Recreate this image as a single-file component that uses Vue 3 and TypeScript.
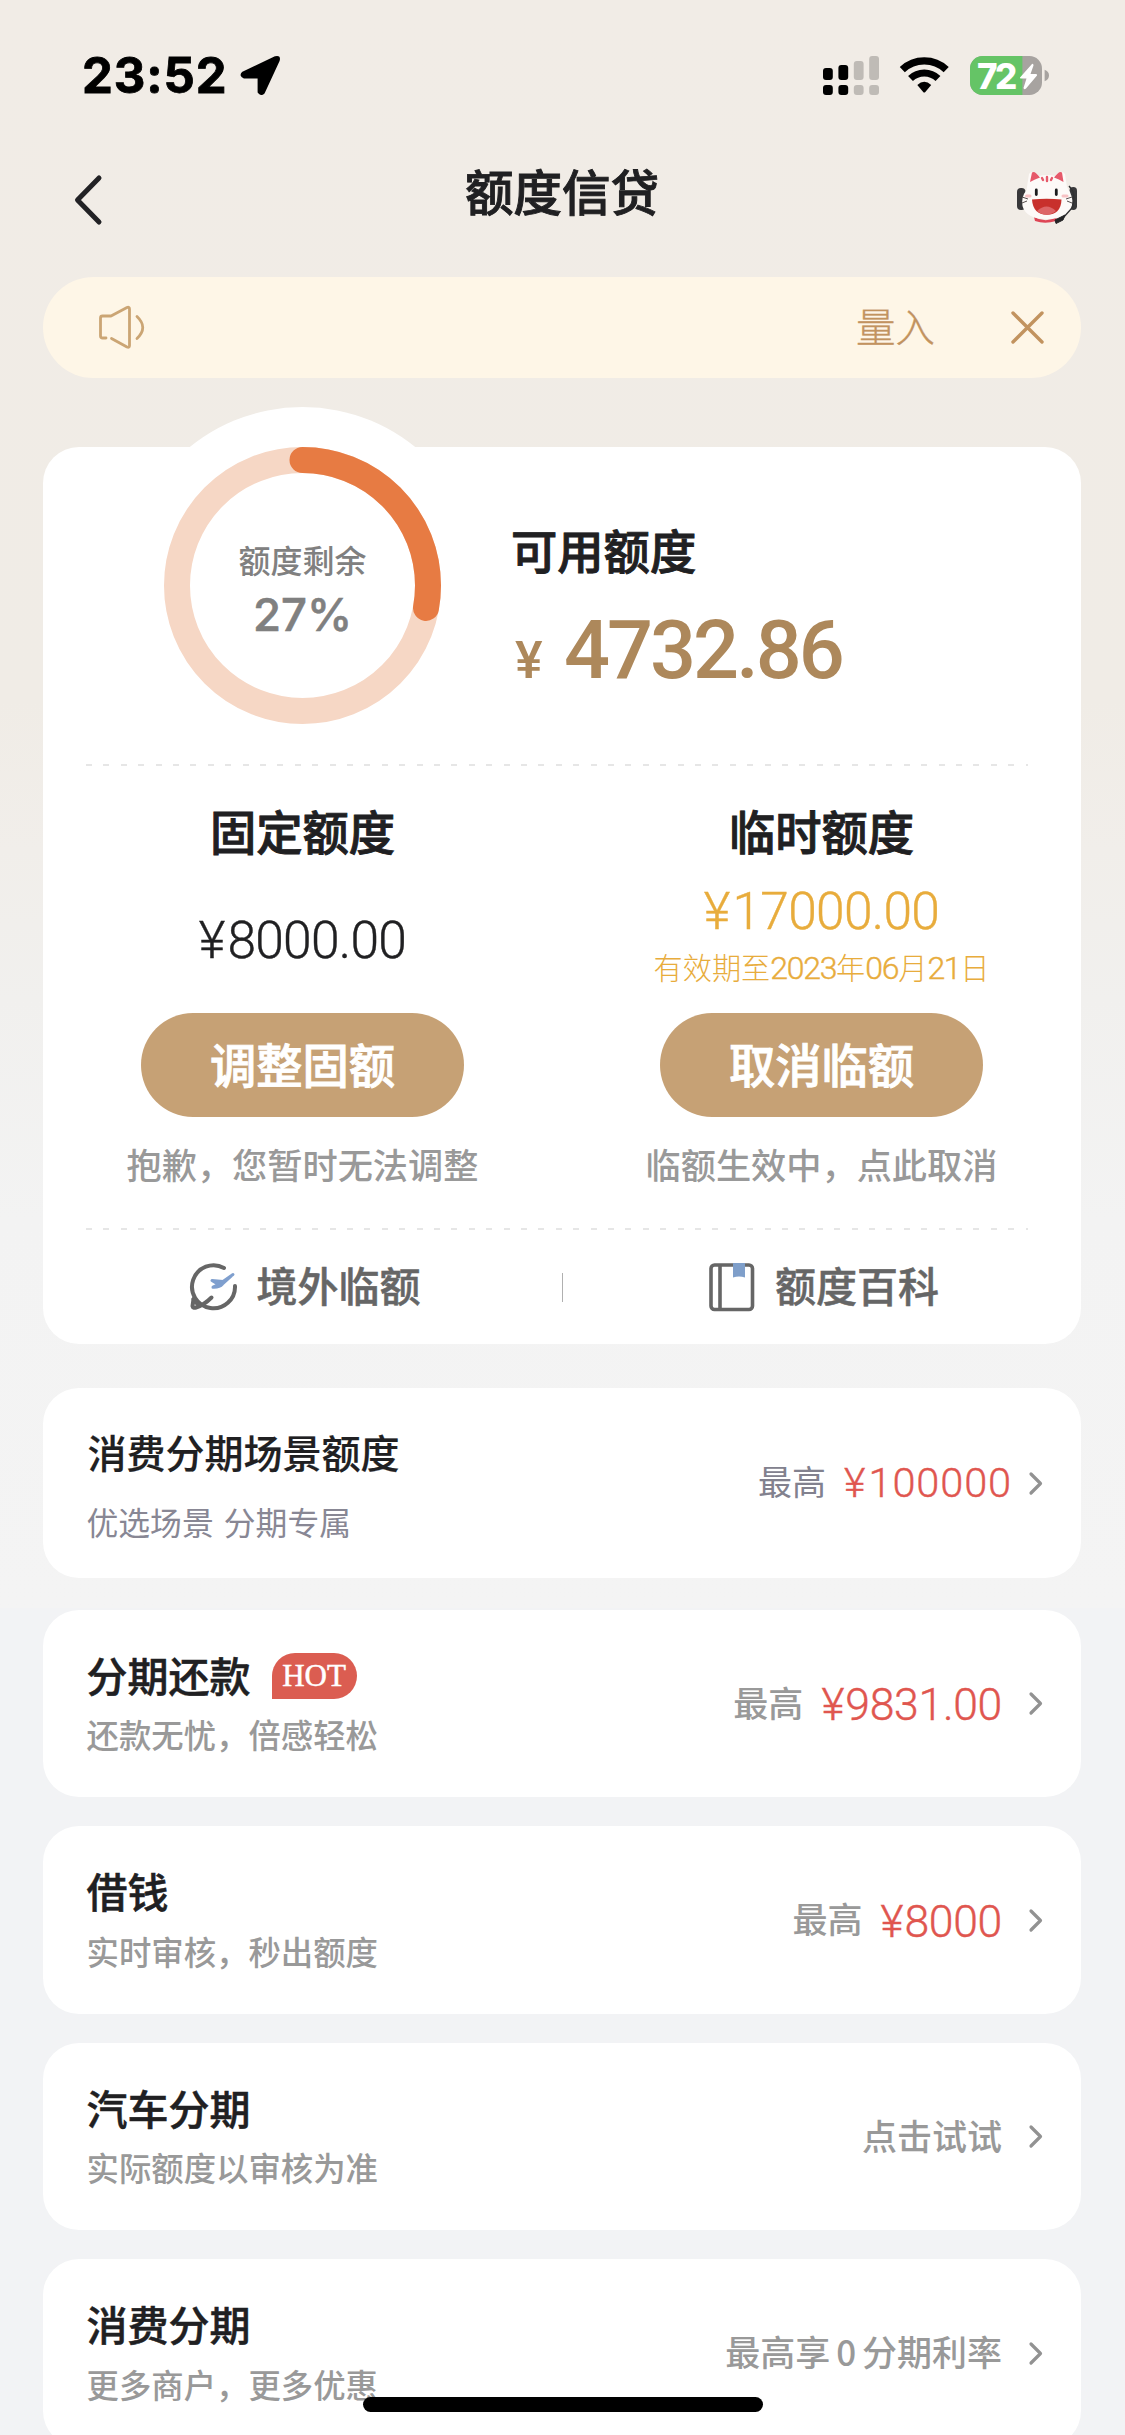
<script setup lang="ts">
interface Offer {
  title: string
  desc: string
  hot?: boolean
  label?: string
  amount?: string
  action?: string
  scene?: boolean
}

const offers: Offer[] = [
  { title: '消费分期场景额度', desc: '优选场景 分期专属', label: '最高', amount: '100000', scene: true },
  { title: '分期还款', desc: '还款无忧，倍感轻松', hot: true, label: '最高', amount: '9831.00' },
  { title: '借钱', desc: '实时审核，秒出额度', label: '最高', amount: '8000' },
  { title: '汽车分期', desc: '实际额度以审核为准', action: '点击试试' },
  { title: '消费分期', desc: '更多商户，更多优惠', action: '最高享 0 分期利率' },
]

const signalBars = [
  { x: 0, y: 12, on: true },
  { x: 15.4, y: 9, on: true },
  { x: 30.8, y: 5, on: false },
  { x: 46.2, y: 0, on: false },
]

const ringRadius = 125.5
const ringLength = 2 * Math.PI * ringRadius
const remaining = 4732.86 / 17000
</script>

<template>
  <div class="page">
    <header class="status">
      <div class="status-left">
        <span class="time">23:52</span>
        <svg class="arrow" width="41" height="41" viewBox="0 0 41 41">
          <path d="M3 18 35.5 2.600Q39.500 1.300 38.300 5.300L23.500 37.500Q21 40 19 37V22H4Q.5 20.500 3 18Z" fill="#000" stroke="#000" stroke-width="2.800" stroke-linejoin="round" />
        </svg>
      </div>
      <div class="status-right">
        <svg width="56" height="39" viewBox="0 0 56 39">
          <g v-for="bar in signalBars" :key="bar.x" :fill="bar.on ? '#000' : '#bfbbb6'">
            <rect :x="bar.x" :y="bar.y" width="9.800" :height="24 - bar.y" rx="3" />
            <rect :x="bar.x" y="29" width="9.800" height="10" rx="3" />
          </g>
        </svg>
        <svg class="wifi" width="49" height="37" viewBox="0 0 49 37">
          <g fill="none" stroke="#000">
            <path d="M2.300 12.600A32 32 0 0 1 46.200 12.600" stroke-width="7.400" />
            <path d="M10.500 21.600A19.800 19.800 0 0 1 38 21.600" stroke-width="7" />
          </g>
          <path d="M17.300 28Q24.250 21.600 31.200 28L25.300 35Q24.250 36.200 23.200 35Z" />
        </svg>
        <svg class="battery" width="80" height="39" viewBox="0 0 80 39">
          <clipPath id="cell"><rect width="72" height="39" rx="12.500" /></clipPath>
          <g clip-path="url(#cell)">
            <rect width="72" height="39" fill="#a7a3a0" />
            <rect width="52.400" height="39" fill="#65c466" />
          </g>
          <path d="M74.600 13.800Q79 15.500 79 19.500T74.600 25.200Z" fill="#a7a3a0" />
          <text x="7" y="32.600" class="battery-text">72</text>
          <path d="M62 8 50 21.500Q49.500 22.500 51 22.500H56.500L53.500 32Q54 34 56 32.500L67 19.500Q67.500 18 66 18H60.500L63.500 9.500Q63.500 7.300 62 8Z" fill="#fff" />
        </svg>
      </div>
    </header>

    <nav class="nav">
      <svg class="back" width="28" height="50" viewBox="0 0 28 50">
        <path d="M25 3 3.500 25 25 47" fill="none" stroke="#222225" stroke-width="5" stroke-linecap="round" stroke-linejoin="round" />
      </svg>
      <h1>额度信贷</h1>
      <svg class="mascot" width="60" height="54" viewBox="0 0 60 54">
        <path d="M17 47Q29 53.500 40 47L39 51Q28 54.500 18 51Z" fill="#de4555" />
        <rect x="0" y="18" width="8.500" height="22" rx="4" fill="#38383a" />
        <rect x="52.500" y="17" width="7.500" height="23" rx="3.700" fill="#38383a" />
        <path d="M9.500 20 12 4Q15-1 22 6Q30 4 38 6Q44-1 48 4L50 17Q57 27 55 36 50 49 30 49 9 49 5.500 36 4 27 9.500 20Z" fill="#fdfaf8" />
        <path d="M13 12 15 2.500Q17.500 0 23 7.500Q18 9 13 12Z" fill="#e6596a" />
        <path d="M46.500 12 45 2.500Q42.500 0 37 7.500Q42 9 46.500 12Z" fill="#e6596a" />
        <path d="M30 7V11M25 8 26 10M35 8 34 10" stroke="#e6596a" stroke-width="2.400" stroke-linecap="round" />
        <path d="M19.300 20V24.500M39.300 20V24.500" stroke="#1c1c1e" stroke-width="2.800" stroke-linecap="round" />
        <path d="M9.500 26H13M46 26H50" stroke="#f7c2c4" stroke-width="3" stroke-linecap="round" />
        <path d="M5 27 11 29M5 33 10 31M55 27 49 29M55 33 50 31" stroke="#57504f" stroke-width="1" />
        <path d="M15 29.500Q29.500 28 44.500 29.500 44 44.500 30 44.800 16 44.500 15 29.500Z" fill="#c8302c" />
        <path d="M20 41Q29.500 32 39 41 34 44.800 30 44.800 24 44.500 20 41Z" fill="#dd6567" />
        <path d="M52 16Q60 24 55 38L46 48" fill="none" stroke="#303032" stroke-width="1.400" />
        <path d="M38 50 48 45 46 50 39 53.500Z" fill="#252527" stroke="#252527" stroke-linejoin="round" />
      </svg>
    </nav>

    <main>
      <section class="notice">
        <svg width="46" height="43" viewBox="0 0 46 43" fill="none" stroke="#cba574" stroke-width="2.800" stroke-linecap="round" stroke-linejoin="round">
          <path d="M7 32H3.500Q1.500 32 1.500 30V12Q1.500 10 3.500 10H12L28 1.500Q30.500.500 30.500 3V39.500Q30.500 42 28 41L12.500 32.500M38 10.500Q49.500 21.500 38 32.500" />
        </svg>
        <span class="notice-text">量入</span>
        <svg class="close" width="33" height="33" viewBox="0 0 33 33">
          <path d="M2 2 31 31M31 2 2 31" stroke="#c2935f" stroke-width="3.400" stroke-linecap="round" />
        </svg>
      </section>

      <section class="card quota">
        <div class="summary">
          <div class="ring">
            <svg width="277" height="277" viewBox="0 0 277 277">
              <circle cx="138.500" cy="138.500" r="178.500" fill="#fff" />
              <circle cx="138.500" cy="138.500" :r="ringRadius" fill="none" stroke="#f6d7c5" stroke-width="26" />
              <circle
                cx="138.500"
                cy="138.500"
                :r="ringRadius"
                fill="none"
                stroke="#e77b43"
                stroke-width="26"
                stroke-linecap="round"
                :stroke-dasharray="`${ringLength * remaining} ${ringLength}`"
                transform="rotate(-90 138.500 138.500)"
              />
            </svg>
            <div class="ring-label">
              <span>额度剩余</span>
              <b>27%</b>
            </div>
          </div>
          <div class="available">
            <h2>可用额度</h2>
            <p><small>¥</small><strong>4732.86</strong></p>
          </div>
        </div>
        <div class="dashes"></div>
        <div class="columns">
          <div class="column">
            <h2>固定额度</h2>
            <div class="value fixed"><p class="money">¥<i>8000.00</i></p></div>
            <button>调整固额</button>
            <p class="hint">抱歉，您暂时无法调整</p>
          </div>
          <div class="column">
            <h2>临时额度</h2>
            <div class="value temp">
              <p class="money">¥<i>17000.00</i></p>
              <p class="until">有效期至<i>2023</i>年<i>06</i>月<i>21</i>日</p>
            </div>
            <button>取消临额</button>
            <p class="hint">临额生效中，点此取消</p>
          </div>
        </div>
        <div class="dashes"></div>
        <div class="links">
          <a class="link">
            <svg width="47" height="48" viewBox="0 0 47 48" fill="none" stroke-linecap="round" stroke-linejoin="round">
              <g stroke="#666" stroke-width="4">
                <path d="M34 5A21.500 21.500 0 1 0 45 23" />
                <path d="M3.500 36 2.500 43Q3 45.500 6 44.500 14 42 21.500 34.500" />
                <path d="M3.500 36Q5 40 10 42" />
              </g>
              <path d="M43 11.500 32.500 21Q29.500 24.500 23 24.200L28.500 21.500 22 17.500 33 18.500Z" fill="#7f9fce" stroke="#7f9fce" stroke-width="3" />
            </svg>
            <span>境外临额</span>
          </a>
          <span class="bar"></span>
          <a class="link">
            <svg width="46" height="49" viewBox="0 0 46 49">
              <rect x="2" y="2" width="41.500" height="44.500" rx="3.500" fill="none" stroke="#666" stroke-width="3.600" />
              <path d="M11 2V46" stroke="#666" stroke-width="3.600" />
              <path d="M24 0H36V14.500Q30 12.500 24 14.500Z" fill="#7f9fca" />
            </svg>
            <span>额度百科</span>
          </a>
        </div>
      </section>

      <section v-for="offer in offers" :key="offer.title" class="card offer" :class="{ scene: offer.scene }">
        <div class="offer-main">
          <div class="offer-title">
            <h3>{{ offer.title }}</h3>
            <span v-if="offer.hot" class="hot">HOT</span>
          </div>
          <p>{{ offer.desc }}</p>
        </div>
        <div class="offer-side">
          <span v-if="offer.label" class="label">{{ offer.label }}</span>
          <span v-if="offer.amount" class="amount">¥<i>{{ offer.amount }}</i></span>
          <span v-if="offer.action" class="label">{{ offer.action }}</span>
          <svg class="chevron" width="14" height="23" viewBox="0 0 14 23">
            <path d="M2 2 11.500 11.500 2 21" fill="none" stroke="#929292" stroke-width="3.200" stroke-linecap="round" stroke-linejoin="round" />
          </svg>
        </div>
      </section>
    </main>
    <div class="home"></div>
  </div>
</template>

<style>
body {
  margin: 0;
  background: #f2f3f5;
}
</style>

<style scoped>
.page {
  position: relative;
  box-sizing: border-box;
  width: 1125px;
  height: 2435px;
  overflow: hidden;
  font-family: "Noto Sans CJK SC", sans-serif;
  color: #202022;
  background: linear-gradient(#f1ece6 0, #f0ece6 700px, #f1eeea 850px, #f1f0ee 1000px, #f3f3f3 1220px, #f4f4f4 1608px, #f2f3f5 1608px);
}
h1, h2, h3, p {
  margin: 0;
}
h1, h2, button {
  -webkit-text-stroke: 0.9px currentColor;
}
i {
  font-style: normal;
}
svg {
  display: block;
  flex: none;
  overflow: visible;
}
.status {
  display: flex;
  justify-content: space-between;
  align-items: center;
  height: 150px;
  padding: 0 75px 0 82px;
}
.status-left, .status-right {
  display: flex;
  align-items: center;
}
.time {
  padding-top: 1px;
  font: 700 49px/60px Inter, sans-serif;
  letter-spacing: 0.9px;
  color: #000;
  -webkit-text-stroke: 0.8px #000;
}
.arrow {
  margin-left: 12px;
}
.wifi {
  margin-left: 21px;
}
.battery {
  margin-left: 21px;
}
.battery-text {
  font: 800 35px Inter, sans-serif;
  letter-spacing: -2.500px;
  fill: #fff;
}
.nav {
  display: flex;
  align-items: center;
  justify-content: space-between;
  height: 99px;
  padding: 0 48px 0 74px;
}
.nav h1 {
  padding: 0 0 19px 5px;
  font-size: 48.500px;
  line-height: 60px;
  font-weight: 500;
}
.mascot {
  margin-top: -5px;
}
main {
  padding: 28px 44px 0 43px;
}
.notice {
  display: flex;
  align-items: center;
  height: 101px;
  padding: 0 37px 0 56px;
  border-radius: 51px;
  background: #fef6e7;
}
.notice-text {
  margin-left: auto;
  padding-bottom: 6px;
  font-size: 39.500px;
  font-weight: 300;
  color: #c2935f;
  -webkit-text-stroke: 0.3px currentColor;
}
.close {
  margin-left: 76px;
}
.card {
  border-radius: 36px;
  background: #fff;
}
.quota {
  margin-top: 69px;
}
.summary {
  display: flex;
  height: 317px;
}
.ring {
  display: grid;
  margin-left: 121px;
  height: 277px;
}
.ring > * {
  grid-area: 1 / 1;
}
.ring-label {
  display: flex;
  flex-direction: column;
  align-items: center;
  padding-top: 89px;
  color: #808080;
  z-index: 1;
}
.ring-label span {
  font-size: 32px;
  line-height: 46px;
  font-weight: 500;
}
.ring-label b {
  margin-top: 8px;
  font: 500 45.500px/50px Inter, sans-serif;
  -webkit-text-stroke: 0.6px currentColor;
}
.available {
  margin-left: 69px;
  padding-top: 71.500px;
}
h2 {
  font-size: 46.300px;
  line-height: 60px;
  font-weight: 500;
}
.available h2 {
  padding-left: 1px;
}
.available p {
  display: flex;
  align-items: baseline;
  margin-top: 32.500px;
  height: 80px;
  font-family: Roboto, sans-serif;
  line-height: 80px;
  color: #ad885b;
}
.available small {
  width: 49px;
  margin-left: 5px;
  font-size: 52px;
  font-weight: 500;
}
.available strong {
  font-size: 81px;
  font-weight: 500;
  letter-spacing: -3px;
}
.dashes {
  height: 2px;
  margin: 0 53px 0 42.500px;
  background: repeating-linear-gradient(90deg, #e6e6e6 0 6px, transparent 6px 17.400px);
}
.columns {
  display: flex;
  height: 462px;
}
.column {
  flex: 1;
  display: flex;
  flex-direction: column;
  align-items: center;
}
.column h2 {
  margin-top: 34px;
}
.value {
  box-sizing: border-box;
  display: flex;
  flex-direction: column;
  align-items: center;
  height: 153px;
}
.fixed {
  padding-top: 55px;
}
.temp {
  padding-top: 26px;
  color: #e8ac3c;
}
.money {
  font: 300 51.500px/51px Roboto, sans-serif;
  white-space: nowrap;
  -webkit-text-stroke: 0.4px currentColor;
}
.money i {
  margin-left: 2px;
  letter-spacing: -0.700px;
}
.until {
  margin-top: 9px;
  font-size: 29.200px;
  line-height: 40px;
  font-weight: 300;
  white-space: nowrap;
}
.until i {
  font-family: Roboto, sans-serif;
  font-size: 32px;
  letter-spacing: -1.300px;
  -webkit-text-stroke: 0.4px currentColor;
}
button {
  width: 323px;
  height: 104px;
  border: 0;
  border-radius: 52px;
  padding: 0 0 4px;
  font: 500 46.300px/60px "Noto Sans CJK SC", sans-serif;
  color: #fff;
  background: #c6a175;
}
.hint {
  margin-top: 23px;
  font-size: 35.200px;
  line-height: 48px;
  font-weight: 500;
  color: #999;
}
.links {
  display: flex;
  align-items: center;
  height: 114px;
}
.link {
  flex: 1;
  display: flex;
  align-items: center;
  justify-content: center;
  gap: 20px;
  font-size: 41px;
  font-weight: 500;
  line-height: 50px;
  color: #666;
  padding-left: 5px;
  -webkit-text-stroke: 0.5px currentColor;
}
.link span {
  padding-bottom: 6px;
}
.bar {
  width: 1px;
  height: 29px;
  margin: 0 -1px 0 0;
  background: #b0b0b0;
}
.offer {
  box-sizing: border-box;
  display: flex;
  justify-content: space-between;
  height: 187.500px;
  margin-top: 29px;
  padding: 39.500px 38px 0 43.500px;
}
.scene {
  height: 190px;
  margin-top: 44px;
  padding-top: 38px;
}
.scene + .offer {
  margin-top: 31.500px;
}
.offer-title {
  display: flex;
  align-items: center;
  height: 50px;
}
h3 {
  padding-bottom: 1px;
  font-size: 41px;
  line-height: 50px;
  font-weight: 500;
  -webkit-text-stroke: 0.5px currentColor;
}
.scene h3 {
  padding: 0 0 1px 1px;
  font-size: 39px;
  -webkit-text-stroke: 0.2px currentColor;
}
.hot {
  width: 85px;
  height: 46px;
  margin: 4px 0 0 21px;
  border-radius: 23px 23px 23px 0;
  font: 31px/46px "Liberation Serif", serif;
  text-align: center;
  color: #fff;
  background: #db5d51;
  -webkit-text-stroke: 0.5px #fff;
}
.offer-main p {
  margin-top: 15px;
  font-size: 32.400px;
  line-height: 40px;
  font-weight: 500;
  color: #999;
}
.scene .offer-main p {
  margin-top: 25px;
  font-size: 31.800px;
  font-weight: 400;
  word-spacing: 3px;
  color: #888794;
}
.offer-side {
  display: flex;
  align-items: center;
  height: 109px;
}
.scene .offer-side {
  height: 114px;
}
.label {
  padding-bottom: 4px;
  font-size: 35px;
  line-height: 50px;
  font-weight: 500;
  word-spacing: -2px;
  color: #999;
}
.scene .label {
  font-size: 34px;
  font-weight: 400;
  color: #82818e;
}
.amount {
  margin-left: 18px;
  font: 300 44.500px/50px Roboto, sans-serif;
  color: #e0564f;
  padding-top: 3px;
  -webkit-text-stroke: 0.4px currentColor;
}
.amount i {
  margin-left: 1px;
  letter-spacing: -0.300px;
}
.scene .amount {
  font-size: 41.500px;
  padding-top: 0;
}
.scene .amount i {
  margin-left: 3px;
  letter-spacing: 0.900px;
}
.chevron {
  margin-left: 27px;
}
.scene .chevron {
  margin-left: 17px;
}
.home {
  position: absolute;
  left: 363px;
  top: 2397px;
  width: 400px;
  height: 15px;
  border-radius: 8px;
  background: #000;
}
</style>
